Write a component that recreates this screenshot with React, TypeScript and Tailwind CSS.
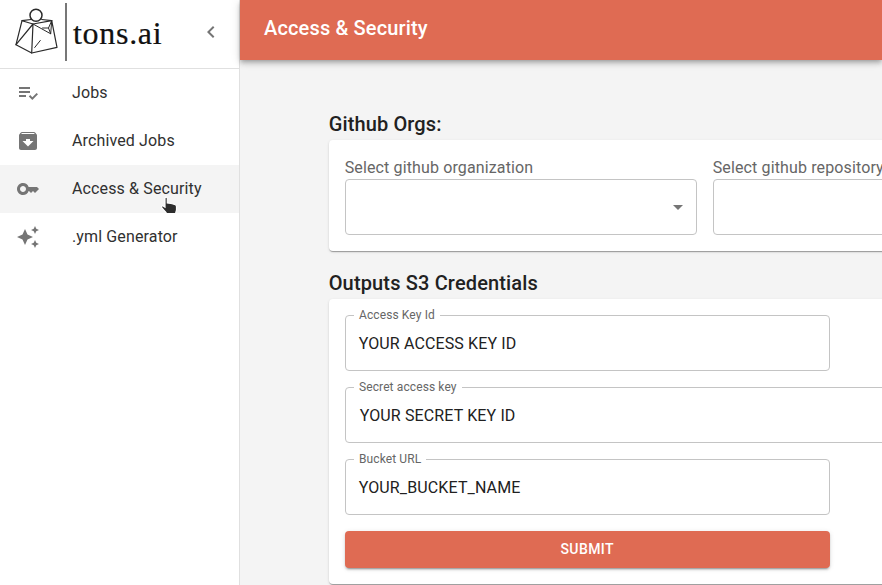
import type { ReactNode } from "react";
import {
  MdArchive,
  MdArrowDropDown,
  MdAutoAwesome,
  MdChevronLeft,
  MdKey,
  MdPlaylistAddCheck,
} from "react-icons/md";

function Logo() {
  return (
    <div className="flex items-center">
      <svg width="44" height="48" viewBox="0 0 44 48" fill="none" stroke="#2a2a2a" strokeWidth="1.2" strokeLinejoin="round" strokeLinecap="round">
        <circle cx="22" cy="7.2" r="6" strokeWidth="1.5" />
        <path d="M17 11.500 8 12.700 2 36.700l15.700 8.300 25.300-5.700-5.300-26.600-10-1.200" />
        <path d="M8 12.700l11 3.300 18.700-3.300M19 16l-1.300 29M19 16 2 36.700" />
        <path d="M19 16l17.700 9.800M37.700 12.700 34.500 20l2.200 5.800 1-13.100M34.500 20h-6M20.700 39.500l5.600-7" strokeWidth="1" />
      </svg>
      <div className="ml-[7px] h-[58px] w-[2px] bg-[#777]" />
      <span className="mt-[2px] ml-[6px] font-['Liberation_Serif',serif] text-[32px] leading-none tracking-[0.7px] text-[#111] [-webkit-text-stroke:0.2px_#111]">
        tons.ai
      </span>
    </div>
  );
}

function NavItem({ icon, label, active = false }: { icon: ReactNode; label: string; active?: boolean }) {
  return (
    <li className={`flex h-12 items-center px-4 text-2xl text-[#757575] ${active ? "bg-[#f4f4f4]" : ""}`}>
      <span className="w-14">{icon}</span>
      <span className="text-base tracking-[0.13px] text-[#303030]">{label}</span>
    </li>
  );
}

function SelectBox({ label }: { label: string }) {
  return (
    <div className="w-[352px] shrink-0">
      <div className="h-[23px] text-base leading-[23px] tracking-[0.13px] whitespace-nowrap text-[#666]">{label}</div>
      <div className="flex h-14 items-center justify-end rounded border border-[#c4c4c4] pr-[6px] text-2xl text-[#757575]">
        <MdArrowDropDown />
      </div>
    </div>
  );
}

function Field({ label, value, wide = false }: { label: string; value: string; wide?: boolean }) {
  return (
    <div className={`relative flex h-14 items-center rounded border border-[#c4c4c4] ${wide ? "w-[720px] pl-[14px]" : "w-[485px] pl-[13px]"}`}>
      <span className="absolute -top-[11px] left-[8.3px] bg-white px-[5px] text-xs leading-5 tracking-[0.11px] text-[#666]">{label}</span>
      <span className="pt-[2px] text-base tracking-[0.13px] text-[#212121]">{value}</span>
    </div>
  );
}

const cardShadow =
  "shadow-[0_2px_1px_-1px_rgba(0,0,0,0.2),0_1px_1px_0_rgba(0,0,0,0.14),0_1px_3px_0_rgba(0,0,0,0.12)]";

export default function App() {
  return (
    <div className="relative flex h-[585px] w-[882px] overflow-hidden bg-[#f4f4f4] font-[Roboto,sans-serif]">
      <aside className="w-60 shrink-0 border-r border-[#e0e0e0] bg-white">
        <div className="flex h-[69px] items-start justify-between border-b border-[#e0e0e0] pr-4 pl-[14px]">
          <div className="pt-[3px]">
            <Logo />
          </div>
          <MdChevronLeft className="mt-5 text-2xl text-[#757575]" />
        </div>
        <ul>
          <NavItem icon={<MdPlaylistAddCheck />} label="Jobs" />
          <NavItem icon={<MdArchive />} label="Archived Jobs" />
          <NavItem icon={<MdKey />} label="Access & Security" active />
          <NavItem icon={<MdAutoAwesome />} label=".yml Generator" />
        </ul>
      </aside>

      <div className="min-w-0 flex-1">
        <header className="flex h-[60px] items-center bg-[#df6b53] pb-1 pl-6 text-xl font-medium tracking-[0.15px] text-white shadow-[0_2px_4px_-1px_rgba(0,0,0,0.2),0_4px_5px_0_rgba(0,0,0,0.14),0_1px_10px_0_rgba(0,0,0,0.12)]">
          Access &amp; Security
        </header>
        <main className="w-[900px] pt-12 pl-[88.7px] text-[#212121]">
          <h2 className="text-xl leading-8 font-medium tracking-[0.13px]">Github Orgs:</h2>
          <section className={`flex gap-4 rounded bg-white p-4 ${cardShadow}`}>
            <SelectBox label="Select github organization" />
            <SelectBox label="Select github repository" />
          </section>
          <h2 className="mt-4 text-xl leading-8 font-medium tracking-[0.15px]">Outputs S3 Credentials</h2>
          <section className={`flex flex-col gap-4 rounded bg-white p-4 ${cardShadow}`}>
            <Field label="Access Key Id" value="YOUR ACCESS KEY ID" />
            <Field label="Secret access key" value="YOUR SECRET KEY ID" wide />
            <Field label="Bucket URL" value="YOUR_BUCKET_NAME" />
            <button className="h-[37px] w-[485px] rounded bg-[#df6b53] pb-[2px] text-sm font-medium tracking-[0.4px] text-white shadow-[0_3px_1px_-2px_rgba(0,0,0,0.2),0_2px_2px_0_rgba(0,0,0,0.14),0_1px_5px_0_rgba(0,0,0,0.12)]">
              SUBMIT
            </button>
          </section>
        </main>
      </div>

      <svg className="absolute top-[196px] left-[160px]" width="18" height="20" viewBox="0 0 18 20">
        <path
          d="M5 2C5.300.900 7 .900 7.300 2V7l1.700.2 2 .3 2 .5 2.300.8c.8.4 1.200 1 1.200 2v3c0 1.200-.8 2-.8 3.700H6.500C6 15.500 2 12.800 1.500 11.300c-.3-1.200 1-1.800 2-1L5 11.200z"
          fill="#2d2d2d"
          stroke="#fff"
          strokeWidth="1.200"
        />
      </svg>
    </div>
  );
}
